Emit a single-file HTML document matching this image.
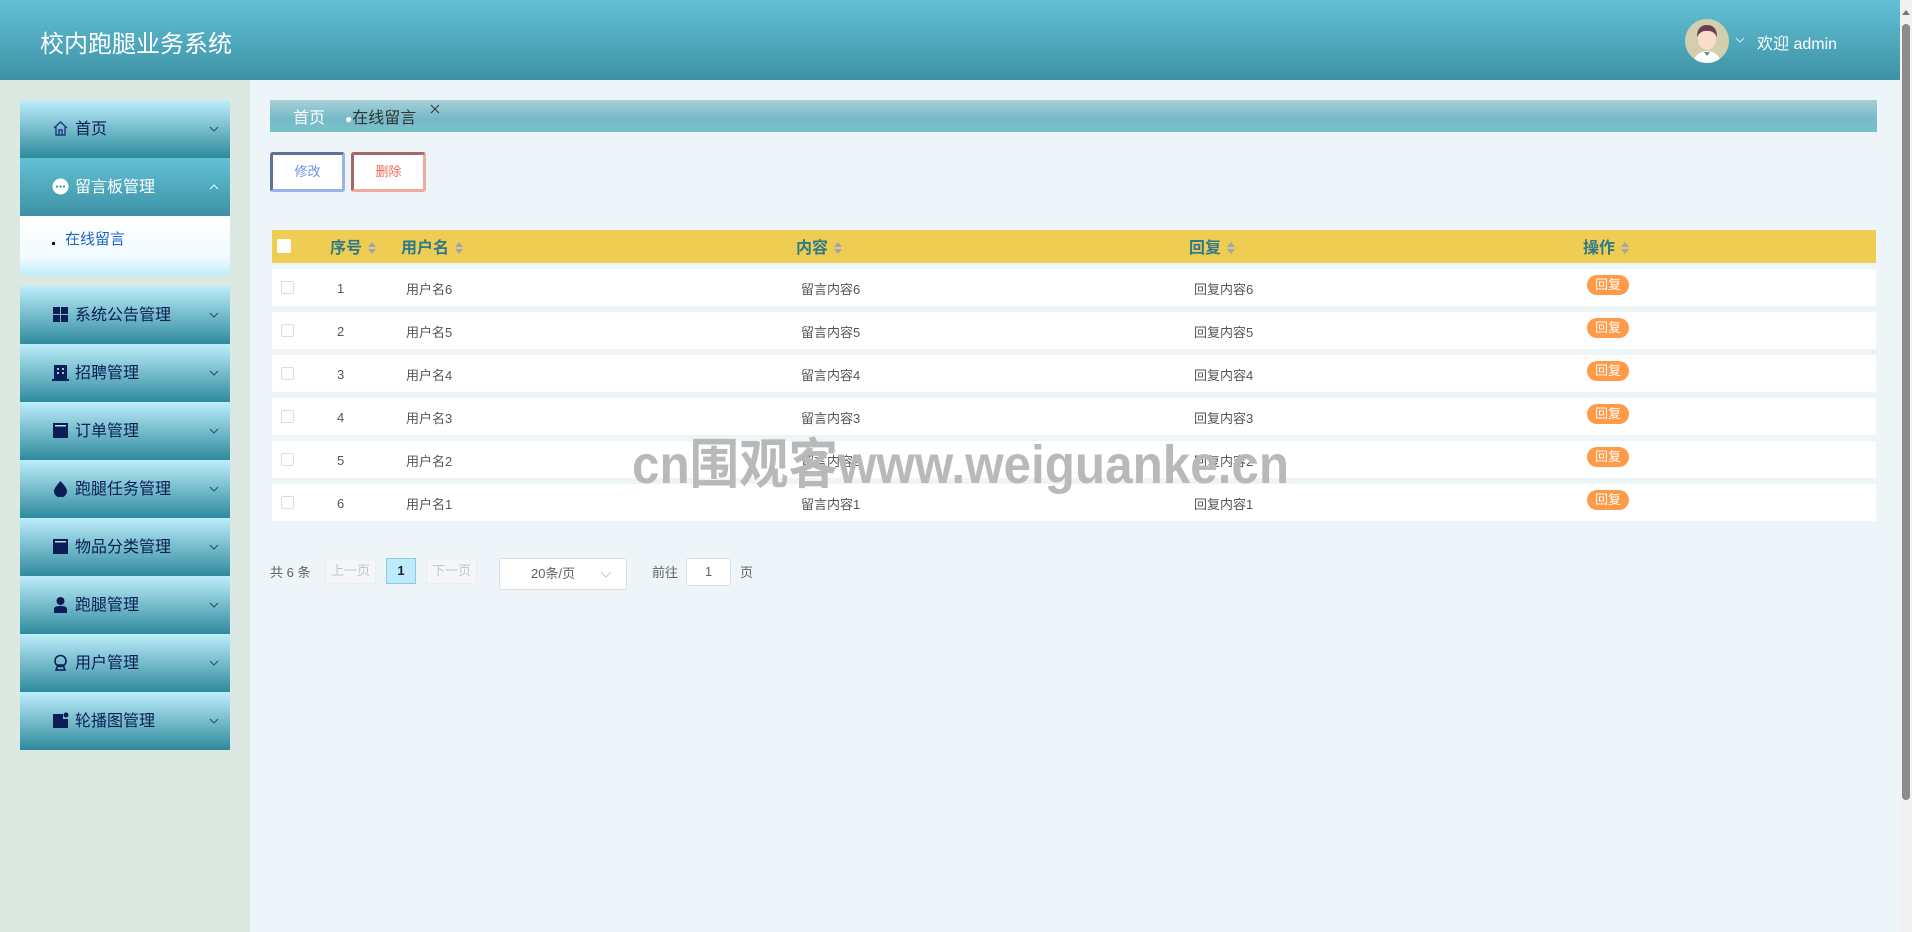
<!DOCTYPE html>
<html><head><meta charset="utf-8">
<style>
*{margin:0;padding:0;box-sizing:border-box}
body{width:1912px;height:932px;overflow:hidden;background:#edf5f8;font-family:"Liberation Sans","Noto Sans CJK SC",sans-serif;position:relative}
.hdr{position:absolute;left:0;top:0;width:1900px;height:80px;background:linear-gradient(#62c1d6,#3e91a4)}
.hdr .t{position:absolute;left:40px;top:24px;font-size:24px;color:#fff}
.av{position:absolute;left:1685px;top:19px;width:44px;height:44px;border-radius:50%;background:#d3cfae;overflow:hidden}
.wel{position:absolute;left:1757px;top:30px;color:#fff;font-size:16px}
.side{position:absolute;left:0;top:80px;width:250px;height:852px;background:#dce8e2}
.mi{position:absolute;left:20px;width:210px;height:58px;background:linear-gradient(#bdeefb,#2e8a9d);color:#0b1d54;font-size:16px}
.mi .ic{position:absolute;left:32px;top:20px;width:17px;height:17px}
.mi .lb{position:absolute;left:55px;top:15px}
.mi .ar{position:absolute;right:10px;top:26px;width:12px;height:7px}
.act{background:linear-gradient(#62c1d6,#3e91a4);color:#fff}
.sub{position:absolute;left:20px;top:216px;width:210px;height:60px;background:linear-gradient(#fff,#f0fbff 70%,#bdeefb);border-radius:0 0 8px 8px}
.bc{position:absolute;left:270px;top:100px;width:1607px;height:32px;background:linear-gradient(#a8d0d6,#74bac8 60%,#7bc0cd)}
.btn{position:absolute;top:152px;width:75px;height:40px;background:#fff;font-size:13px;text-align:center;line-height:34px;border:3px solid;border-radius:3px}
.th{position:absolute;left:272px;top:230px;width:1604px;height:33px;background:#efcc52;color:#2f7a8a;font-size:16px;font-weight:bold}
.th span{position:absolute;top:4px}
.srt{display:inline-block;width:8px;height:12px;margin-left:6px;vertical-align:-1px;position:relative}
.srt:before{content:"";position:absolute;left:0;top:0;border:4px solid transparent;border-bottom:5px solid #9aa5b5;border-top:0}
.srt:after{content:"";position:absolute;left:0;top:7px;border:4px solid transparent;border-top:5px solid #9aa5b5;border-bottom:0}
.row{position:absolute;left:272px;width:1604px;height:37px;background:#fff;font-size:13px;color:#555}
.row span{position:absolute;top:10px}
.row span.n{top:12px}
.cb{position:absolute;left:9px;top:12px;width:13px;height:13px;border:1px solid #ddd;border-radius:2px;background:#fff}
.bg{position:absolute;left:1315px;top:6px;width:42px;height:20px;border-radius:10px;background:#ff9a48;color:#fff;font-size:13px;text-align:center;line-height:20px}
.pg{position:absolute;top:556px;font-size:13px;color:#606266}
.wm{position:absolute;left:632px;top:420px;font-size:54px;font-weight:bold;color:#b9b9b9;white-space:nowrap;transform:scaleX(0.915);transform-origin:0 0}
.sb{position:absolute;left:1900px;top:0;width:12px;height:932px;background:#f1f1f1}
</style></head><body>
<div class="hdr"><div class="t">校内跑腿业务系统</div>
<div class="av"><svg width="44" height="44"><ellipse cx="22" cy="20" rx="9" ry="11" fill="#f8dccc"/><path d="M12 18 Q12 6 22 6 Q32 6 32 18 Q28 11 22 12 Q16 11 12 18Z" fill="#6a4050"/><path d="M8 44 Q10 33 22 32 Q34 33 36 44Z" fill="#fff"/><path d="M19 33 L22 37 L25 33Z" fill="#5a9a7a"/></svg></div>
<svg style="position:absolute;left:1735px;top:37px" width="10" height="6"><path d="M1 1 L5 5 L9 1" fill="none" stroke="#cfeef5" stroke-width="1"/></svg>
<div class="wel">欢迎 admin</div></div>
<div class="side"></div>
<div class="mi" style="top:100px"><svg class="ic" viewBox="0 0 17 17"><path d="M2 8 L8.5 2 L15 8 M4 7 V15 H13 V7 M7 15 V10 H10 V15" fill="none" stroke="#1a3a80" stroke-width="1.4"/></svg><span class="lb">首页</span><svg class="ar"><path d="M2 1 L6 5 L10 1" fill="none" stroke="#2a4a6a"/></svg></div>
<div class="mi act" style="top:158px"><svg class="ic" viewBox="0 0 17 17"><circle cx="8.5" cy="8.5" r="8" fill="#fff"/><circle cx="5" cy="8.5" r="1.1" fill="#3e91a4"/><circle cx="8.5" cy="8.5" r="1.1" fill="#3e91a4"/><circle cx="12" cy="8.5" r="1.1" fill="#3e91a4"/></svg><span class="lb">留言板管理</span><svg class="ar"><path d="M2 5 L6 1 L10 5" fill="none" stroke="#dff"/></svg></div>
<div class="sub"><div style="position:absolute;left:32px;top:26px;width:3px;height:3px;background:#111"></div><div style="position:absolute;left:45px;top:12px;color:#1e63c8;font-size:15px">在线留言</div></div>
<div class="mi" style="top:286px"><svg class="ic" viewBox="0 0 17 17"><rect x="1" y="1" width="7" height="7" fill="#0b1d54"/><rect x="9" y="1" width="7" height="7" fill="#0b1d54"/><rect x="1" y="9" width="7" height="7" fill="#0b1d54"/><rect x="9" y="9" width="7" height="7" fill="#0b1d54"/></svg><span class="lb">系统公告管理</span><svg class="ar"><path d="M2 1 L6 5 L10 1" fill="none" stroke="#2a4a6a"/></svg></div>
<div class="mi" style="top:344px"><svg class="ic" viewBox="0 0 17 17"><rect x="2" y="1" width="13" height="15" fill="#0b1d54"/><rect x="0" y="15" width="17" height="2" fill="#0b1d54"/><g fill="#9cd"><rect x="5" y="4" width="2" height="2"/><rect x="10" y="4" width="2" height="2"/><rect x="5" y="8" width="2" height="2"/><rect x="10" y="8" width="2" height="2"/></g></svg><span class="lb">招聘管理</span><svg class="ar"><path d="M2 1 L6 5 L10 1" fill="none" stroke="#2a4a6a"/></svg></div>
<div class="mi" style="top:402px"><svg class="ic" viewBox="0 0 17 17"><rect x="1" y="1" width="15" height="15" fill="#0b1d54"/><rect x="3" y="3" width="11" height="1.5" fill="#bde"/></svg><span class="lb">订单管理</span><svg class="ar"><path d="M2 1 L6 5 L10 1" fill="none" stroke="#2a4a6a"/></svg></div>
<div class="mi" style="top:460px"><svg class="ic" viewBox="0 0 17 17"><path d="M8.5 1 Q15 8 15 11 A6.5 6.5 0 0 1 2 11 Q2 8 8.5 1Z" fill="#0b1d54"/></svg><span class="lb">跑腿任务管理</span><svg class="ar"><path d="M2 1 L6 5 L10 1" fill="none" stroke="#2a4a6a"/></svg></div>
<div class="mi" style="top:518px"><svg class="ic" viewBox="0 0 17 17"><rect x="1" y="1" width="15" height="15" fill="#0b1d54"/><rect x="3" y="3" width="11" height="1.5" fill="#bde"/></svg><span class="lb">物品分类管理</span><svg class="ar"><path d="M2 1 L6 5 L10 1" fill="none" stroke="#2a4a6a"/></svg></div>
<div class="mi" style="top:576px"><svg class="ic" viewBox="0 0 17 17"><circle cx="8.5" cy="5" r="4" fill="#0b1d54"/><path d="M2 17 V13 Q2 10 8.5 10 Q15 10 15 13 V17Z" fill="#0b1d54"/></svg><span class="lb">跑腿管理</span><svg class="ar"><path d="M2 1 L6 5 L10 1" fill="none" stroke="#2a4a6a"/></svg></div>
<div class="mi" style="top:634px"><svg class="ic" viewBox="0 0 17 17"><circle cx="8.5" cy="7" r="5.5" fill="none" stroke="#0b1d54" stroke-width="1.6"/><path d="M4 16 H13 L11 11 H6Z" fill="none" stroke="#0b1d54" stroke-width="1.6"/></svg><span class="lb">用户管理</span><svg class="ar"><path d="M2 1 L6 5 L10 1" fill="none" stroke="#2a4a6a"/></svg></div>
<div class="mi" style="top:692px"><svg class="ic" viewBox="0 0 17 17"><path d="M1 2 H11 V7 H16 V16 H1Z" fill="#0b1d54"/><circle cx="14" cy="3" r="2.5" fill="#0b1d54"/></svg><span class="lb">轮播图管理</span><svg class="ar"><path d="M2 1 L6 5 L10 1" fill="none" stroke="#2a4a6a"/></svg></div>

<div class="bc"><span style="position:absolute;left:23px;top:4px;color:#fff;font-size:16px">首页</span><span style="position:absolute;left:75px;top:4px;color:#333;font-size:16px"><span style="color:#fff;font-size:12px">●</span>在线留言</span><svg style="position:absolute;left:160px;top:4px" width="10" height="10"><path d="M1 1 L9 9 M9 1 L1 9" stroke="#333" stroke-width="1"/></svg></div>
<div class="btn" style="left:270px;border-color:#5f7399 #97b5ea #97b5ea #5f7399;color:#6c8fe6">修改</div>
<div class="btn" style="left:351px;border-color:#a06a66 #f2a9a0 #f2a9a0 #a06a66;color:#f06a5a">删除</div>

<div class="th"><div style="position:absolute;left:5px;top:9px;width:14px;height:14px;background:#fff;border-radius:2px"></div>
<span style="left:58px">序号<i class="srt"></i></span><span style="left:129px">用户名<i class="srt"></i></span><span style="left:524px">内容<i class="srt"></i></span><span style="left:917px">回复<i class="srt"></i></span><span style="left:1311px">操作<i class="srt"></i></span></div>

<div class="row" style="top:269px"><div class="cb"></div><span class="n" style="left:65px">1</span><span style="left:134px">用户名6</span><span style="left:529px">留言内容6</span><span style="left:922px">回复内容6</span><div class="bg">回复</div></div>
<div class="row" style="top:312px"><div class="cb"></div><span class="n" style="left:65px">2</span><span style="left:134px">用户名5</span><span style="left:529px">留言内容5</span><span style="left:922px">回复内容5</span><div class="bg">回复</div></div>
<div class="row" style="top:355px"><div class="cb"></div><span class="n" style="left:65px">3</span><span style="left:134px">用户名4</span><span style="left:529px">留言内容4</span><span style="left:922px">回复内容4</span><div class="bg">回复</div></div>
<div class="row" style="top:398px"><div class="cb"></div><span class="n" style="left:65px">4</span><span style="left:134px">用户名3</span><span style="left:529px">留言内容3</span><span style="left:922px">回复内容3</span><div class="bg">回复</div></div>
<div class="row" style="top:441px"><div class="cb"></div><span class="n" style="left:65px">5</span><span style="left:134px">用户名2</span><span style="left:529px">留言内容2</span><span style="left:922px">回复内容2</span><div class="bg">回复</div></div>
<div class="row" style="top:484px"><div class="cb"></div><span class="n" style="left:65px">6</span><span style="left:134px">用户名1</span><span style="left:529px">留言内容1</span><span style="left:922px">回复内容1</span><div class="bg">回复</div></div>

<div class="pg" style="left:270px;top:562px">共 6 条</div>
<div style="position:absolute;left:325px;top:558px;width:51px;height:26px;border:1px solid #eee;background:#f4f6f8;color:#c0c4cc;font-size:13px;text-align:center;line-height:24px">上一页</div>
<div style="position:absolute;left:386px;top:558px;width:30px;height:26px;border:1px solid #8fcbe0;background:#bdebfb;color:#222;font-size:13px;font-weight:bold;text-align:center;line-height:24px">1</div>
<div style="position:absolute;left:426px;top:558px;width:51px;height:26px;border:1px solid #eee;background:#f4f6f8;color:#c0c4cc;font-size:13px;text-align:center;line-height:24px">下一页</div>
<div style="position:absolute;left:499px;top:558px;width:128px;height:32px;border:1px solid #dcdfe6;border-radius:3px;background:#fff;color:#606266;font-size:13px;line-height:30px;padding-left:31px">20条/页<svg style="position:absolute;right:14px;top:12px" width="12" height="7"><path d="M1 1 L6 6 L11 1" fill="none" stroke="#c0c4cc"/></svg></div>
<div class="pg" style="left:652px;top:562px">前往</div>
<div style="position:absolute;left:686px;top:558px;width:45px;height:28px;border:1px solid #dcdfe6;border-radius:3px;background:#fff;color:#606266;font-size:13px;text-align:center;line-height:26px">1</div>
<div class="pg" style="left:740px;top:562px">页</div>

<div class="wm">cn围观客www.weiguanke.cn</div>
<div class="sb"><div style="position:absolute;left:2px;top:24px;width:8px;height:776px;border-radius:4px;background:#8c8c8c"></div><div style="position:absolute;left:2px;top:10px;border:4px solid transparent;border-bottom:5px solid #777;border-top:0"></div></div>
</body></html>
